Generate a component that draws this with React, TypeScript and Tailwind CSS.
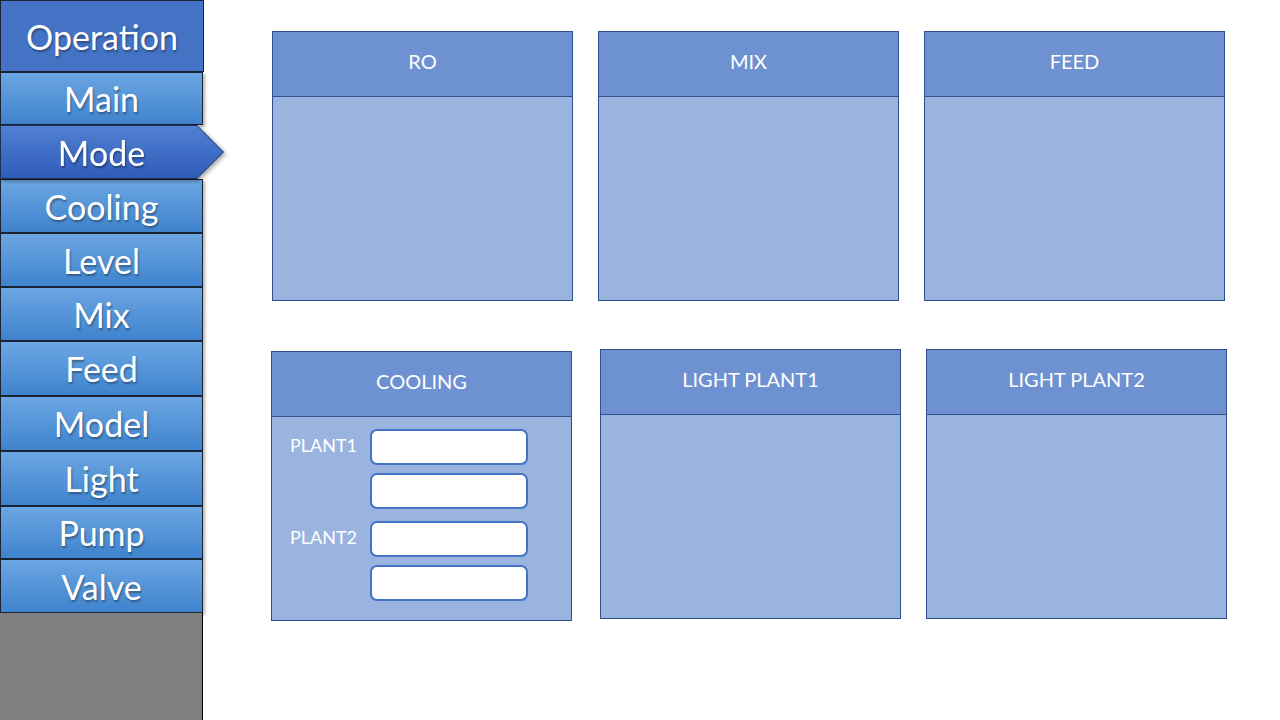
const menu = [
  { label: 'Main', h: 'h-[53px]' },
  { label: 'Mode', h: 'h-[54px]', active: true },
  { label: 'Cooling', h: 'h-[54px]' },
  { label: 'Level', h: 'h-[54px]' },
  { label: 'Mix', h: 'h-[54px]' },
  { label: 'Feed', h: 'h-[55px]' },
  { label: 'Model', h: 'h-[55px]' },
  { label: 'Light', h: 'h-[55px]' },
  { label: 'Pump', h: 'h-[53px]' },
  { label: 'Valve', h: 'h-[54px]' },
];

const shadowText = '[text-shadow:1px_2px_2px_rgba(0,0,0,0.35)]';

function MenuButton({ label, h, active }: { label: string; h: string; active?: boolean }) {
  if (active) {
    return (
      <div className={`relative ${h} w-[224px] z-10 drop-shadow-[2px_2px_2px_rgba(0,0,0,0.35)]`}>
        <div className="absolute inset-0 bg-[#1e2f55] [clip-path:polygon(0_0,197px_0,100%_50%,197px_100%,0_100%)]" />
        <div className="absolute inset-[1px] flex items-center bg-gradient-to-b from-[#5180d3] to-[#2f5cb9] [clip-path:polygon(0_0,196px_0,100%_50%,196px_100%,0_100%)]">
          <span className={`w-[201px] text-center text-[34px] text-white ${shadowText}`}>{label}</span>
        </div>
      </div>
    );
  }
  return (
    <div
      className={`${h} w-[203px] flex items-center justify-center border border-[#1c2433] bg-gradient-to-b from-[#6ca6e3] to-[#3e83cd] shadow-[2px_2px_3px_rgba(0,0,0,0.3)]`}
    >
      <span className={`text-[34px] text-white ${shadowText}`}>{label}</span>
    </div>
  );
}

function Panel({ title, className = '', children }: { title: string; className?: string; children?: React.ReactNode }) {
  return (
    <div className={`w-[301px] h-[270px] flex flex-col border border-[#2f528f] bg-[#9bb3df] ${className}`}>
      <div className="h-[65px] pb-[6px] flex items-center justify-center bg-[#6e91d1] border-b border-[#2f528f] text-[20px] text-white">
        {title}
      </div>
      {children}
    </div>
  );
}

function Field() {
  return <div className="w-[158px] h-[36px] rounded-[7px] border-2 border-[#4472c4] bg-white" />;
}

export default function App() {
  return (
    <div className="flex w-[1280px] h-[720px] bg-white overflow-hidden font-['Lato','Open_Sans',sans-serif]">
      <div className="w-[203px] flex flex-col shrink-0">
        <div className="h-[72px] w-[204px] flex items-center justify-center border border-[#1c2433] bg-[#4472c4]">
          <span className={`text-[34px] text-white ${shadowText}`}>Operation</span>
        </div>
        {menu.map((m) => (
          <MenuButton key={m.label} {...m} />
        ))}
        <div className="flex-1 w-[203px] bg-[#7f7f7f] border-r border-black" />
      </div>

      <div className="flex flex-col">
        <div className="flex gap-[25px] ml-[69px] mt-[31px]">
          <Panel title="RO" />
          <Panel title="MIX" />
          <Panel title="FEED" />
        </div>

        <div className="flex items-start ml-[68px] mt-[48px]">
          <Panel title="COOLING" className="mt-[2px]">
            <div className="flex flex-col pt-[12px] pl-[18px]">
              <div className="flex gap-[13px]">
                <span className="w-[67px] pt-[3px] text-[18px] text-white">PLANT1</span>
                <div className="flex flex-col gap-[8px]">
                  <Field />
                  <Field />
                </div>
              </div>
              <div className="flex gap-[13px] mt-[12px]">
                <span className="w-[67px] pt-[3px] text-[18px] text-white">PLANT2</span>
                <div className="flex flex-col gap-[8px]">
                  <Field />
                  <Field />
                </div>
              </div>
            </div>
          </Panel>
          <Panel title="LIGHT PLANT1" className="ml-[28px]" />
          <Panel title="LIGHT PLANT2" className="ml-[25px]" />
        </div>
      </div>
    </div>
  );
}
